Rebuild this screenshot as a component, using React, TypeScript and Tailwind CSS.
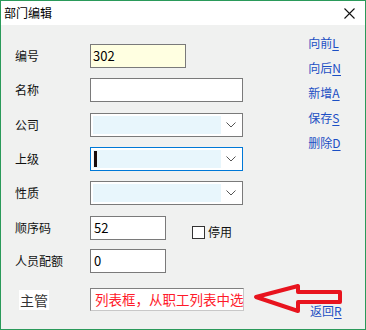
import React from "react";

const CJK = "font-['Segoe_UI','Noto_Sans_CJK_SC',sans-serif]";

function Chevron() {
  return (
    <svg width="10" height="6" viewBox="0 0 10 6" className="block">
      <path d="M0.5 0.5 L5 5 L9.5 0.5" fill="none" stroke="#555" strokeWidth="1" />
    </svg>
  );
}

function Select({ focused, cursor }: { focused?: boolean; cursor?: boolean }) {
  return (
    <div
      className={`flex h-[24px] w-[153px] items-stretch border bg-white p-[2px] ${
        focused ? "border-[#0078d7]" : "border-[#7a7a7a]"
      }`}
    >
      <div className="relative flex-1 bg-[#e8f6fc]">
        {cursor && <div className="absolute left-[1px] top-[1px] h-[16px] w-[3px] bg-[#1a0c0c]" />}
      </div>
      <div className="flex w-[19px] items-center justify-center">
        <Chevron />
      </div>
    </div>
  );
}

function Label({ children }: { children: React.ReactNode }) {
  return <div className="w-[75px] shrink-0 text-[12px] leading-none text-[#111]">{children}</div>;
}

function Link({ text, key_ }: { text: string; key_: string }) {
  return (
    <div className="text-[12px] leading-none text-[#1c4fc4]">
      {text}
      <span className="underline underline-offset-2">{key_}</span>
    </div>
  );
}

export default function App() {
  return (
    <div className={`flex h-[330px] w-[366px] flex-col border border-[#2a9a5a] bg-[#f0f1f0] ${CJK}`}>
      {/* Title bar */}
      <div className="flex h-[24px] items-center justify-between bg-white pl-[3px] pr-[10px]">
        <span className="text-[12px] text-black">部门编辑</span>
        <svg width="11" height="11" viewBox="0 0 11 11">
          <path d="M0.5 0.5 L10.5 10.5 M10.5 0.5 L0.5 10.5" stroke="#111" strokeWidth="1.1" />
        </svg>
      </div>

      <div className="relative flex flex-1">
        {/* Form */}
        <div className="flex flex-col pl-[14px] pt-[19px]">
          <div className="flex items-center">
            <Label>编号</Label>
            <div className="flex h-[24px] w-[96px] items-center border border-[#7a7a7a] bg-[#ffffe1] pl-[2px] text-[13px] text-black">
              302
            </div>
          </div>
          <div className="mt-[10px] flex items-center">
            <Label>名称</Label>
            <div className="h-[24px] w-[153px] border border-[#7a7a7a] bg-white" />
          </div>
          <div className="mt-[11px] flex items-center">
            <Label>公司</Label>
            <Select />
          </div>
          <div className="mt-[10px] flex items-center">
            <Label>上级</Label>
            <Select focused cursor />
          </div>
          <div className="mt-[10px] flex items-center">
            <Label>性质</Label>
            <Select />
          </div>
          <div className="mt-[11px] flex items-center">
            <Label>顺序码</Label>
            <div className="flex h-[24px] w-[76px] items-center border border-[#7a7a7a] bg-white pl-[3px] text-[13px] text-black">
              52
            </div>
            <div className="ml-[26px] mt-[8px] flex items-center">
              <div className="h-[13px] w-[13px] border border-[#333] bg-white" />
              <span className="ml-[3px] text-[12px] leading-none text-[#111]">停用</span>
            </div>
          </div>
          <div className="mt-[9px] flex items-center">
            <Label>人员配额</Label>
            <div className="flex h-[24px] w-[76px] items-center border border-[#7a7a7a] bg-white pl-[3px] text-[13px] text-black">
              0
            </div>
          </div>
          <div className="mt-[14px] flex items-center">
            <div className="w-[75px] shrink-0 pl-[4px]">
              <span className="bg-white px-[1px] text-[14px] leading-[18px] text-[#333]">主管</span>
            </div>
            <div className="flex h-[23px] w-[154px] items-center overflow-visible whitespace-nowrap border border-[#c8c8c8] border-l-[#808080] border-t-[#808080] bg-white pl-[4px] text-[13.5px] text-[#ff1a2a]">
              列表框，从职工列表中选
            </div>
          </div>
        </div>

        {/* Right links */}
        <div className="ml-auto flex flex-col gap-[13px] pr-[24px] pt-[12px]">
          <Link text="向前" key_="L" />
          <Link text="向后" key_="N" />
          <Link text="新增" key_="A" />
          <Link text="保存" key_="S" />
          <Link text="删除" key_="D" />
        </div>

        <div className="absolute left-[309px] top-[280px]">
          <Link text="返回" key_="R" />
        </div>

        {/* Annotation arrow */}
        <svg className="absolute left-[250px] top-[257px]" width="96" height="34" viewBox="0 0 96 34">
          <path
            d="M5 15 L47 4 L47 10 L89 10 L89 20 L47 20 L47 29 Z"
            fill="none"
            stroke="#e8141e"
            strokeWidth="4"
            strokeLinejoin="round"
          />
        </svg>
      </div>
    </div>
  );
}
